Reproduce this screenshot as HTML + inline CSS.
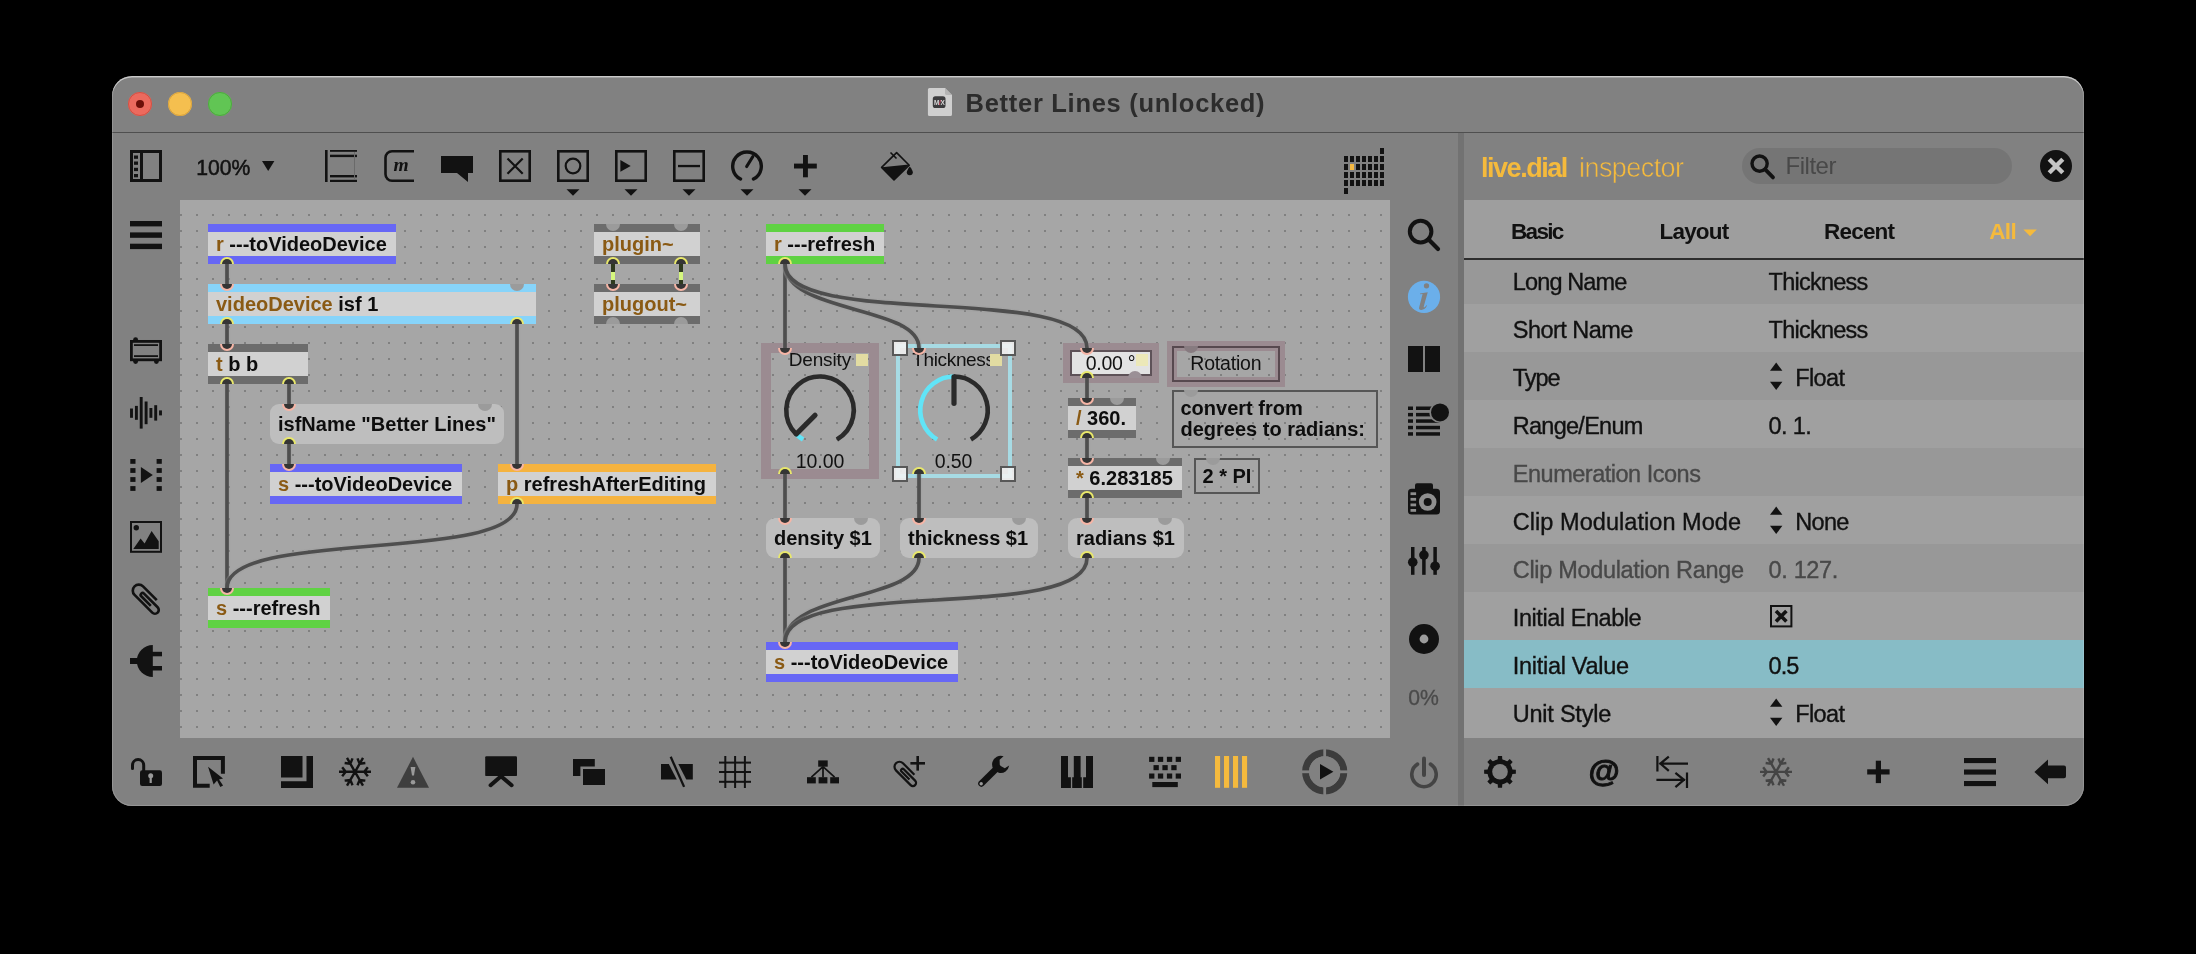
<!DOCTYPE html>
<html><head><meta charset="utf-8"><title>Better Lines (unlocked)</title>
<style>
html,body{margin:0;padding:0;background:#000;}
body{width:2196px;height:954px;overflow:hidden;position:relative;font-family:"Liberation Sans",sans-serif;}
#win{position:absolute;left:112px;top:76px;width:1972px;height:730px;border-radius:20px;overflow:hidden;background:#818181;}
#in{position:absolute;left:-112px;top:-76px;width:2196px;height:954px;will-change:transform;}
svg{position:absolute;left:0;top:0;}
svg text{font-family:"Liberation Sans",sans-serif;}
#edge{position:absolute;left:0;top:0;right:0;bottom:0;border-radius:20px;box-shadow:inset 0 1.5px 0.5px rgba(255,255,255,.5),inset 0 0 0 1px rgba(255,255,255,.16);pointer-events:none;}
.t{position:absolute;white-space:nowrap;line-height:1;}
</style></head><body>
<div id="win"><div id="in">
<svg width="2196" height="954" viewBox="0 0 2196 954">
<rect x="112" y="76" width="1972" height="730" fill="#818181"/>
<rect x="112" y="132" width="1972" height="1" fill="#4f4f4f"/>
<circle cx="140" cy="104" r="12" fill="#ec6a5e"/><circle cx="140" cy="104" r="11.5" fill="none" stroke="#d05044" stroke-width="1"/>
<circle cx="140" cy="104" r="4" fill="#6e0f09"/>
<circle cx="180" cy="104" r="12" fill="#f5bf4f"/><circle cx="180" cy="104" r="11.5" fill="none" stroke="#d9a23c" stroke-width="1"/>
<circle cx="220" cy="104" r="12" fill="#61c554"/><circle cx="220" cy="104" r="11.5" fill="none" stroke="#4ea73f" stroke-width="1"/>
<rect x="180" y="200" width="1210" height="538" fill="#a6a6a6"/>
<defs><pattern id="dots" x="180" y="214" width="16" height="16" patternUnits="userSpaceOnUse"><rect width="2" height="2" fill="#808080"/></pattern><clipPath id="cv"><rect x="180" y="200" width="1210" height="538"/></clipPath></defs>
<rect x="180" y="200" width="1210" height="538" fill="url(#dots)"/>
<rect x="1458" y="133" width="6" height="673" fill="#727272"/>
<g clip-path="url(#cv)">
<rect x="208" y="224" width="188" height="40" fill="#6767f5"/>
<rect x="208" y="232" width="188" height="24" fill="#d1d1d1"/>
<text x="216" y="251" font-size="20" font-weight="bold" fill="#0d0d0d" text-anchor="start"><tspan fill="#8a5a14">r</tspan> ---toVideoDevice</text>
<path d="M220 264A7 7 0 0 1 234 264Z" fill="#e9e86b"/>
<path d="M222 264A5 5 0 0 1 232 264Z" fill="#353535"/>
<rect x="208" y="284" width="328" height="40" fill="#87d4fa"/>
<rect x="208" y="292" width="328" height="24" fill="#d1d1d1"/>
<text x="216" y="311" font-size="20" font-weight="bold" fill="#0d0d0d" text-anchor="start"><tspan fill="#8a5a14">videoDevice</tspan> isf 1</text>
<path d="M220 284A7 7 0 0 0 234 284Z" fill="#f6b5a6"/>
<path d="M222 284A5 5 0 0 0 232 284Z" fill="#353535"/>
<path d="M510 284A7 7 0 0 0 524 284Z" fill="#9b9b9b"/>
<path d="M220 324A7 7 0 0 1 234 324Z" fill="#e9e86b"/>
<path d="M222 324A5 5 0 0 1 232 324Z" fill="#353535"/>
<path d="M510 324A7 7 0 0 1 524 324Z" fill="#e9e86b"/>
<path d="M512 324A5 5 0 0 1 522 324Z" fill="#353535"/>
<rect x="208" y="344" width="100" height="40" fill="#6c6c6c"/>
<rect x="208" y="352" width="100" height="24" fill="#d1d1d1"/>
<text x="216" y="371" font-size="20" font-weight="bold" fill="#0d0d0d" text-anchor="start"><tspan fill="#8a5a14">t</tspan> b b</text>
<path d="M220 344A7 7 0 0 0 234 344Z" fill="#f6b5a6"/>
<path d="M222 344A5 5 0 0 0 232 344Z" fill="#353535"/>
<path d="M220 384A7 7 0 0 1 234 384Z" fill="#e9e86b"/>
<path d="M222 384A5 5 0 0 1 232 384Z" fill="#353535"/>
<path d="M282 384A7 7 0 0 1 296 384Z" fill="#e9e86b"/>
<path d="M284 384A5 5 0 0 1 294 384Z" fill="#353535"/>
<rect x="270" y="404" width="234" height="40" rx="9" fill="#bebebe"/>
<text x="278" y="431" font-size="20" font-weight="bold" fill="#0d0d0d" text-anchor="start">isfName "Better Lines"</text>
<path d="M282 404A7 7 0 0 0 296 404Z" fill="#f6b5a6"/>
<path d="M284 404A5 5 0 0 0 294 404Z" fill="#353535"/>
<path d="M478 404A7 7 0 0 0 492 404Z" fill="#9b9b9b"/>
<path d="M282 444A7 7 0 0 1 296 444Z" fill="#e9e86b"/>
<path d="M284 444A5 5 0 0 1 294 444Z" fill="#353535"/>
<rect x="270" y="464" width="192" height="40" fill="#6767f5"/>
<rect x="270" y="472" width="192" height="24" fill="#d1d1d1"/>
<text x="278" y="491" font-size="20" font-weight="bold" fill="#0d0d0d" text-anchor="start"><tspan fill="#8a5a14">s</tspan> ---toVideoDevice</text>
<path d="M282 464A7 7 0 0 0 296 464Z" fill="#f6b5a6"/>
<path d="M284 464A5 5 0 0 0 294 464Z" fill="#353535"/>
<rect x="498" y="464" width="218" height="40" fill="#f5b33f"/>
<rect x="498" y="472" width="218" height="24" fill="#d1d1d1"/>
<text x="506" y="491" font-size="20" font-weight="bold" fill="#0d0d0d" text-anchor="start"><tspan fill="#8a5a14">p</tspan> refreshAfterEditing</text>
<path d="M510 464A7 7 0 0 0 524 464Z" fill="#f6b5a6"/>
<path d="M512 464A5 5 0 0 0 522 464Z" fill="#353535"/>
<path d="M510 504A7 7 0 0 1 524 504Z" fill="#e9e86b"/>
<path d="M512 504A5 5 0 0 1 522 504Z" fill="#353535"/>
<rect x="208" y="588" width="122" height="40" fill="#5fd243"/>
<rect x="208" y="596" width="122" height="24" fill="#d1d1d1"/>
<text x="216" y="615" font-size="20" font-weight="bold" fill="#0d0d0d" text-anchor="start"><tspan fill="#8a5a14">s</tspan> ---refresh</text>
<path d="M220 588A7 7 0 0 0 234 588Z" fill="#f6b5a6"/>
<path d="M222 588A5 5 0 0 0 232 588Z" fill="#353535"/>
<rect x="594" y="224" width="106" height="40" fill="#6c6c6c"/>
<rect x="594" y="232" width="106" height="24" fill="#d1d1d1"/>
<text x="602" y="251" font-size="20" font-weight="bold" fill="#0d0d0d" text-anchor="start"><tspan fill="#8a5a14">plugin~</tspan></text>
<path d="M606 224A7 7 0 0 0 620 224Z" fill="#9b9b9b"/>
<path d="M674 224A7 7 0 0 0 688 224Z" fill="#9b9b9b"/>
<path d="M606 264A7 7 0 0 1 620 264Z" fill="#e9e86b"/>
<path d="M608 264A5 5 0 0 1 618 264Z" fill="#353535"/>
<path d="M674 264A7 7 0 0 1 688 264Z" fill="#e9e86b"/>
<path d="M676 264A5 5 0 0 1 686 264Z" fill="#353535"/>
<rect x="594" y="284" width="106" height="40" fill="#6c6c6c"/>
<rect x="594" y="292" width="106" height="24" fill="#d1d1d1"/>
<text x="602" y="311" font-size="20" font-weight="bold" fill="#0d0d0d" text-anchor="start"><tspan fill="#8a5a14">plugout~</tspan></text>
<path d="M606 284A7 7 0 0 0 620 284Z" fill="#f6b5a6"/>
<path d="M608 284A5 5 0 0 0 618 284Z" fill="#353535"/>
<path d="M674 284A7 7 0 0 0 688 284Z" fill="#f6b5a6"/>
<path d="M676 284A5 5 0 0 0 686 284Z" fill="#353535"/>
<path d="M606 324A7 7 0 0 1 620 324Z" fill="#9b9b9b"/>
<path d="M674 324A7 7 0 0 1 688 324Z" fill="#9b9b9b"/>
<rect x="766" y="224" width="118" height="40" fill="#5fd243"/>
<rect x="766" y="232" width="118" height="24" fill="#d1d1d1"/>
<text x="774" y="251" font-size="20" font-weight="bold" fill="#0d0d0d" text-anchor="start"><tspan fill="#8a5a14">r</tspan> ---refresh</text>
<path d="M778 264A7 7 0 0 1 792 264Z" fill="#e9e86b"/>
<path d="M780 264A5 5 0 0 1 790 264Z" fill="#353535"/>
<rect x="1068" y="398" width="68" height="40" fill="#6c6c6c"/>
<rect x="1068" y="406" width="68" height="24" fill="#d1d1d1"/>
<text x="1076" y="425" font-size="20" font-weight="bold" fill="#0d0d0d" text-anchor="start"><tspan fill="#8a5a14">/</tspan> 360.</text>
<path d="M1080 398A7 7 0 0 0 1094 398Z" fill="#f6b5a6"/>
<path d="M1082 398A5 5 0 0 0 1092 398Z" fill="#353535"/>
<path d="M1110 398A7 7 0 0 0 1124 398Z" fill="#9b9b9b"/>
<path d="M1080 438A7 7 0 0 1 1094 438Z" fill="#e9e86b"/>
<path d="M1082 438A5 5 0 0 1 1092 438Z" fill="#353535"/>
<rect x="1068" y="458" width="114" height="40" fill="#6c6c6c"/>
<rect x="1068" y="466" width="114" height="24" fill="#d1d1d1"/>
<text x="1076" y="485" font-size="20" font-weight="bold" fill="#0d0d0d" text-anchor="start"><tspan fill="#8a5a14">*</tspan> 6.283185</text>
<path d="M1080 458A7 7 0 0 0 1094 458Z" fill="#f6b5a6"/>
<path d="M1082 458A5 5 0 0 0 1092 458Z" fill="#353535"/>
<path d="M1156 458A7 7 0 0 0 1170 458Z" fill="#9b9b9b"/>
<path d="M1080 498A7 7 0 0 1 1094 498Z" fill="#e9e86b"/>
<path d="M1082 498A5 5 0 0 1 1092 498Z" fill="#353535"/>
<rect x="766" y="518" width="114" height="40" rx="9" fill="#bebebe"/>
<text x="774" y="545" font-size="20" font-weight="bold" fill="#0d0d0d" text-anchor="start">density $1</text>
<path d="M778 518A7 7 0 0 0 792 518Z" fill="#f6b5a6"/>
<path d="M780 518A5 5 0 0 0 790 518Z" fill="#353535"/>
<path d="M854 518A7 7 0 0 0 868 518Z" fill="#9b9b9b"/>
<path d="M778 558A7 7 0 0 1 792 558Z" fill="#e9e86b"/>
<path d="M780 558A5 5 0 0 1 790 558Z" fill="#353535"/>
<rect x="900" y="518" width="138" height="40" rx="9" fill="#bebebe"/>
<text x="908" y="545" font-size="20" font-weight="bold" fill="#0d0d0d" text-anchor="start">thickness $1</text>
<path d="M912 518A7 7 0 0 0 926 518Z" fill="#f6b5a6"/>
<path d="M914 518A5 5 0 0 0 924 518Z" fill="#353535"/>
<path d="M1012 518A7 7 0 0 0 1026 518Z" fill="#9b9b9b"/>
<path d="M912 558A7 7 0 0 1 926 558Z" fill="#e9e86b"/>
<path d="M914 558A5 5 0 0 1 924 558Z" fill="#353535"/>
<rect x="1068" y="518" width="116" height="40" rx="9" fill="#bebebe"/>
<text x="1076" y="545" font-size="20" font-weight="bold" fill="#0d0d0d" text-anchor="start">radians $1</text>
<path d="M1080 518A7 7 0 0 0 1094 518Z" fill="#f6b5a6"/>
<path d="M1082 518A5 5 0 0 0 1092 518Z" fill="#353535"/>
<path d="M1158 518A7 7 0 0 0 1172 518Z" fill="#9b9b9b"/>
<path d="M1080 558A7 7 0 0 1 1094 558Z" fill="#e9e86b"/>
<path d="M1082 558A5 5 0 0 1 1092 558Z" fill="#353535"/>
<rect x="766" y="642" width="192" height="40" fill="#6767f5"/>
<rect x="766" y="650" width="192" height="24" fill="#d1d1d1"/>
<text x="774" y="669" font-size="20" font-weight="bold" fill="#0d0d0d" text-anchor="start"><tspan fill="#8a5a14">s</tspan> ---toVideoDevice</text>
<path d="M778 642A7 7 0 0 0 792 642Z" fill="#f6b5a6"/>
<path d="M780 642A5 5 0 0 0 790 642Z" fill="#353535"/>
<rect x="766" y="348" width="108" height="126" fill="none" stroke="#9b8b91" stroke-width="10"/>
<text x="788.7" y="365.6" font-size="19" font-weight="normal" fill="#111" text-anchor="start" letter-spacing="-0.146">Density</text>
<text x="795.7" y="468" font-size="19.5" font-weight="normal" fill="#111" text-anchor="start" letter-spacing="-0.038">10.00</text>
<rect x="856" y="354" width="12" height="12" fill="#e2dca2"/>
<path d="M803.12 439.53A33.75 33.75 0 0 1 796.14 434.16" fill="none" stroke="#62e4f7" stroke-width="4.6"/>
<path d="M796.14 434.16A33.75 33.75 0 1 1 836.88 439.53" fill="none" stroke="#2a2a2a" stroke-width="4.6"/>
<path d="M815.05 415.25L796.31 433.99" stroke="#2a2a2a" stroke-width="5.2" stroke-linecap="round"/>
<path d="M778 348A7 7 0 0 0 792 348Z" fill="#f6b5a6"/>
<path d="M780 348A5 5 0 0 0 790 348Z" fill="#353535"/>
<path d="M778 474A7 7 0 0 1 792 474Z" fill="#e9e86b"/>
<path d="M780 474A5 5 0 0 1 790 474Z" fill="#353535"/>
<text x="912.2" y="365.6" font-size="19" font-weight="normal" fill="#111" text-anchor="start" letter-spacing="-0.338">Thickness</text>
<text x="934.7" y="468" font-size="19.5" font-weight="normal" fill="#111" text-anchor="start" letter-spacing="-0.133">0.50</text>
<rect x="990" y="354" width="12" height="12" fill="#e2dca2"/>
<path d="M937.12 439.53A33.75 33.75 0 0 1 954.00 376.55" fill="none" stroke="#62e4f7" stroke-width="4.6"/>
<path d="M954.00 376.55A33.75 33.75 0 0 1 970.88 439.53" fill="none" stroke="#2a2a2a" stroke-width="4.6"/>
<path d="M954.00 403.30L954.00 376.80" stroke="#2a2a2a" stroke-width="5.2" stroke-linecap="round"/>
<path d="M912 348A7 7 0 0 0 926 348Z" fill="#f6b5a6"/>
<path d="M914 348A5 5 0 0 0 924 348Z" fill="#353535"/>
<path d="M912 474A7 7 0 0 1 926 474Z" fill="#e9e86b"/>
<path d="M914 474A5 5 0 0 1 924 474Z" fill="#353535"/>
<rect x="898" y="346" width="112" height="130" fill="none" stroke="#a7dbe4" stroke-width="4"/>
<rect x="893" y="341" width="14" height="14" fill="#f2f2f2" fill-opacity=".9" stroke="#585858" stroke-width="2"/>
<rect x="1001" y="341" width="14" height="14" fill="#f2f2f2" fill-opacity=".9" stroke="#585858" stroke-width="2"/>
<rect x="893" y="467" width="14" height="14" fill="#f2f2f2" fill-opacity=".9" stroke="#585858" stroke-width="2"/>
<rect x="1001" y="467" width="14" height="14" fill="#f2f2f2" fill-opacity=".9" stroke="#585858" stroke-width="2"/>
<rect x="1068" y="348" width="86" height="30" fill="none" stroke="#9b8b91" stroke-width="10"/>
<rect x="1070" y="350" width="82" height="26" fill="#5e5258"/>
<rect x="1072" y="352" width="78" height="22" fill="#e3e3e3"/>
<text x="1085.7" y="369.5" font-size="19.5" font-weight="normal" fill="#111" text-anchor="start" letter-spacing="-0.265">0.00 °</text>
<rect x="1136" y="354" width="12" height="12" fill="#ece8b8"/>
<path d="M1080 348A7 7 0 0 0 1094 348Z" fill="#f6b5a6"/>
<path d="M1082 348A5 5 0 0 0 1092 348Z" fill="#353535"/>
<path d="M1080 378A7 7 0 0 1 1094 378Z" fill="#e9e86b"/>
<path d="M1082 378A5 5 0 0 1 1092 378Z" fill="#353535"/>
<path d="M1128 378A7 7 0 0 1 1142 378Z" fill="#9b9096"/>
<rect x="1172" y="346" width="108" height="36" fill="none" stroke="#9b8b91" stroke-width="10"/>
<rect x="1173" y="347" width="106" height="34" fill="none" stroke="#57494f" stroke-width="2"/>
<text x="1190.3" y="369.5" font-size="19.5" font-weight="normal" fill="#111" text-anchor="start" letter-spacing="-0.204">Rotation</text>
<path d="M1184 346A7 7 0 0 0 1198 346Z" fill="#877b80"/>
<rect x="1173" y="391" width="204" height="56" fill="none" stroke="#565656" stroke-width="2"/>
<text x="1180.5" y="414.5" font-size="20" font-weight="bold" fill="#0d0d0d" text-anchor="start">convert from</text>
<text x="1180.5" y="436.4" font-size="20" font-weight="bold" fill="#0d0d0d" text-anchor="start">degrees to radians:</text>
<path d="M1184 390A7 7 0 0 0 1198 390Z" fill="#9b9b9b"/>
<rect x="1195" y="459" width="64" height="34" fill="none" stroke="#565656" stroke-width="2"/>
<text x="1202.5" y="482.5" font-size="20" font-weight="bold" fill="#0d0d0d" text-anchor="start">2 * PI</text>
<path d="M1206 458A7 7 0 0 0 1220 458Z" fill="#9b9b9b"/>
<path d="M227 264L227 284" fill="none" stroke="#9c9c9c" stroke-opacity=".3" stroke-width="6.4"/>
<path d="M227 264L227 284" fill="none" stroke="#4e4e4e" stroke-width="3.7"/>
<path d="M227 324L227 344" fill="none" stroke="#9c9c9c" stroke-opacity=".3" stroke-width="6.4"/>
<path d="M227 324L227 344" fill="none" stroke="#4e4e4e" stroke-width="3.7"/>
<path d="M289 384L289 404" fill="none" stroke="#9c9c9c" stroke-opacity=".3" stroke-width="6.4"/>
<path d="M289 384L289 404" fill="none" stroke="#4e4e4e" stroke-width="3.7"/>
<path d="M289 444L289 464" fill="none" stroke="#9c9c9c" stroke-opacity=".3" stroke-width="6.4"/>
<path d="M289 444L289 464" fill="none" stroke="#4e4e4e" stroke-width="3.7"/>
<path d="M517 324L517 464" fill="none" stroke="#9c9c9c" stroke-opacity=".3" stroke-width="6.4"/>
<path d="M517 324L517 464" fill="none" stroke="#4e4e4e" stroke-width="3.7"/>
<path d="M227 384L227 588" fill="none" stroke="#9c9c9c" stroke-opacity=".3" stroke-width="6.4"/>
<path d="M227 384L227 588" fill="none" stroke="#4e4e4e" stroke-width="3.7"/>
<path d="M517 504C517 564 227 528 227 588" fill="none" stroke="#9c9c9c" stroke-opacity=".3" stroke-width="6.4"/>
<path d="M517 504C517 564 227 528 227 588" fill="none" stroke="#4e4e4e" stroke-width="3.7"/>
<path d="M785 264L785 348" fill="none" stroke="#9c9c9c" stroke-opacity=".3" stroke-width="6.4"/>
<path d="M785 264L785 348" fill="none" stroke="#4e4e4e" stroke-width="3.7"/>
<path d="M785 264C785 314 919 305 919 348" fill="none" stroke="#9c9c9c" stroke-opacity=".3" stroke-width="6.4"/>
<path d="M785 264C785 314 919 305 919 348" fill="none" stroke="#4e4e4e" stroke-width="3.7"/>
<path d="M785 264C785 330 1087 282 1087 348" fill="none" stroke="#9c9c9c" stroke-opacity=".3" stroke-width="6.4"/>
<path d="M785 264C785 330 1087 282 1087 348" fill="none" stroke="#4e4e4e" stroke-width="3.7"/>
<path d="M1087 378L1087 398" fill="none" stroke="#9c9c9c" stroke-opacity=".3" stroke-width="6.4"/>
<path d="M1087 378L1087 398" fill="none" stroke="#4e4e4e" stroke-width="3.7"/>
<path d="M1087 438L1087 458" fill="none" stroke="#9c9c9c" stroke-opacity=".3" stroke-width="6.4"/>
<path d="M1087 438L1087 458" fill="none" stroke="#4e4e4e" stroke-width="3.7"/>
<path d="M1087 498L1087 518" fill="none" stroke="#9c9c9c" stroke-opacity=".3" stroke-width="6.4"/>
<path d="M1087 498L1087 518" fill="none" stroke="#4e4e4e" stroke-width="3.7"/>
<path d="M785 474L785 518" fill="none" stroke="#9c9c9c" stroke-opacity=".3" stroke-width="6.4"/>
<path d="M785 474L785 518" fill="none" stroke="#4e4e4e" stroke-width="3.7"/>
<path d="M919 474L919 518" fill="none" stroke="#9c9c9c" stroke-opacity=".3" stroke-width="6.4"/>
<path d="M919 474L919 518" fill="none" stroke="#4e4e4e" stroke-width="3.7"/>
<path d="M785 558L785 642" fill="none" stroke="#9c9c9c" stroke-opacity=".3" stroke-width="6.4"/>
<path d="M785 558L785 642" fill="none" stroke="#4e4e4e" stroke-width="3.7"/>
<path d="M919 558C919 601 785 592 785 642" fill="none" stroke="#9c9c9c" stroke-opacity=".3" stroke-width="6.4"/>
<path d="M919 558C919 601 785 592 785 642" fill="none" stroke="#4e4e4e" stroke-width="3.7"/>
<path d="M1087 558C1087 624 785 576 785 642" fill="none" stroke="#9c9c9c" stroke-opacity=".3" stroke-width="6.4"/>
<path d="M1087 558C1087 624 785 576 785 642" fill="none" stroke="#4e4e4e" stroke-width="3.7"/>
<rect x="611" y="264" width="4" height="20" fill="#2f3a1e"/>
<rect x="611" y="272" width="4" height="8" fill="#d6f77e"/>
<rect x="679" y="264" width="4" height="20" fill="#2f3a1e"/>
<rect x="679" y="272" width="4" height="8" fill="#d6f77e"/>
</g>
<rect x="131.5" y="151.5" width="29" height="29" fill="none" stroke="#121212" stroke-width="3"/>
<rect x="140" y="151" width="3" height="30" fill="#121212"/>
<rect x="134" y="155.5" width="4" height="3.3" fill="#121212"/>
<rect x="134" y="161.5" width="4" height="3.3" fill="#121212"/>
<rect x="134" y="167.8" width="4" height="3.3" fill="#121212"/>
<rect x="134" y="174" width="4" height="3.3" fill="#121212"/>
<text x="196.2" y="174.8" font-size="21.2" font-weight="normal" fill="#121212" text-anchor="start" stroke="#121212" stroke-width=".5">100%</text>
<path d="M262 161h12.4l-6.2 10z" fill="#121212"/>
<rect x="325" y="150" width="2.6" height="32" fill="#121212"/>
<rect x="330" y="150" width="27" height="1.8" fill="#121212"/><rect x="330" y="154.7" width="27" height="2.4" fill="#121212"/>
<rect x="330" y="175" width="27" height="2.4" fill="#121212"/><rect x="330" y="179.8" width="27" height="2.2" fill="#121212"/>
<rect x="354" y="152" width="1" height="27" fill="#6a6a6a"/>
<path d="M414 151.2h-22a6.5 6.5 0 0 0 -6.5 6.5v16.6a6.5 6.5 0 0 0 6.5 6.5h22" fill="none" stroke="#121212" stroke-width="2.6"/>
<text x="401" y="171" font-family="Liberation Serif" font-style="italic" font-weight="bold" font-size="19.5" text-anchor="middle" fill="#121212" style="font-family:'Liberation Serif',serif">m</text>
<path d="M441 156h32v17h-5v9l-11-9h-16z" fill="#121212"/>
<rect x="500.3" y="151.3" width="29.4" height="29.4" fill="none" stroke="#121212" stroke-width="2.6"/>
<path d="M507.5 158.5l15.2 15.2M522.7 158.5l-15.2 15.2" stroke="#121212" stroke-width="2.2"/>
<rect x="558.3" y="151.3" width="29.4" height="29.4" fill="none" stroke="#121212" stroke-width="2.6"/>
<circle cx="573" cy="166" r="7.3" fill="none" stroke="#121212" stroke-width="2.2"/>
<path d="M566.5 189.2h13l-6.5 6.5z" fill="#121212"/>
<rect x="616.3" y="151.3" width="29.4" height="29.4" fill="none" stroke="#121212" stroke-width="2.6"/>
<path d="M620.4 160v11.8l10.3 -5.9z" fill="#121212"/>
<path d="M624.5 189.2h13l-6.5 6.5z" fill="#121212"/>
<rect x="674.3" y="151.3" width="29.4" height="29.4" fill="none" stroke="#121212" stroke-width="2.6"/>
<rect x="678" y="164.9" width="22" height="2.3" fill="#121212"/>
<path d="M682.5 189.2h13l-6.5 6.5z" fill="#121212"/>
<path d="M740.51 179.04A14.3 14.3 0 1 1 753.49 179.04" fill="none" stroke="#121212" stroke-width="3.4" stroke-linecap="round"/>
<path d="M746.6 166.6L752.8 156.6" stroke="#121212" stroke-width="3" stroke-linecap="round"/>
<path d="M740.5 189.2h13l-6.5 6.5z" fill="#121212"/>
<rect x="794" y="163.6" width="22.8" height="4.9" fill="#121212"/><rect x="803" y="155" width="4.9" height="22.3" fill="#121212"/>
<path d="M798.5 189.2h13l-6.5 6.5z" fill="#121212"/>
<path d="M896.6 152.6L909.2 165.2L894 180L881.6 167.4Z" fill="none" stroke="#121212" stroke-width="1.6" stroke-linejoin="round"/>
<path d="M881.8 167.3L909 164.6L894 180Z" fill="#121212"/>
<path d="M890.5 152.5L896.5 158.5" stroke="#121212" stroke-width="1.6"/>
<path d="M909.8 166.5c2 2.8 3 4.3 3 5.8a3 3 0 0 1 -6 0c0 -1.5 1 -3 3 -5.8z" fill="#121212"/>
<rect x="1344" y="156" width="4" height="6" fill="#121212"/>
<rect x="1344" y="164" width="4" height="6" fill="#121212"/>
<rect x="1344" y="172" width="4" height="6" fill="#121212"/>
<rect x="1344" y="180" width="4" height="6" fill="#121212"/>
<rect x="1350" y="156" width="4" height="6" fill="#121212"/>
<rect x="1350" y="164" width="4" height="6" fill="#f5b942"/>
<rect x="1350" y="172" width="4" height="6" fill="#121212"/>
<rect x="1350" y="180" width="4" height="6" fill="#121212"/>
<rect x="1356" y="156" width="4" height="6" fill="#121212"/>
<rect x="1356" y="164" width="4" height="6" fill="#121212"/>
<rect x="1356" y="172" width="4" height="6" fill="#121212"/>
<rect x="1356" y="180" width="4" height="6" fill="#121212"/>
<rect x="1362" y="156" width="4" height="6" fill="#121212"/>
<rect x="1362" y="164" width="4" height="6" fill="#121212"/>
<rect x="1362" y="172" width="4" height="6" fill="#121212"/>
<rect x="1362" y="180" width="4" height="6" fill="#121212"/>
<rect x="1368" y="156" width="4" height="6" fill="#121212"/>
<rect x="1368" y="164" width="4" height="6" fill="#121212"/>
<rect x="1368" y="172" width="4" height="6" fill="#121212"/>
<rect x="1368" y="180" width="4" height="6" fill="#121212"/>
<rect x="1374" y="156" width="4" height="6" fill="#121212"/>
<rect x="1374" y="164" width="4" height="6" fill="#121212"/>
<rect x="1374" y="172" width="4" height="6" fill="#121212"/>
<rect x="1374" y="180" width="4" height="6" fill="#121212"/>
<rect x="1380" y="156" width="4" height="6" fill="#121212"/>
<rect x="1380" y="164" width="4" height="6" fill="#121212"/>
<rect x="1380" y="172" width="4" height="6" fill="#121212"/>
<rect x="1380" y="180" width="4" height="6" fill="#121212"/>
<rect x="1380" y="148" width="4" height="6" fill="#121212"/><rect x="1344" y="188" width="4" height="6" fill="#121212"/>
<rect x="130" y="221" width="32" height="5.4" fill="#121212"/>
<rect x="130" y="232.4" width="32" height="5.4" fill="#121212"/>
<rect x="130" y="243.7" width="32" height="5.4" fill="#121212"/>
<rect x="131.4" y="341.4" width="29.2" height="18.4" fill="none" stroke="#121212" stroke-width="2.8"/>
<rect x="134" y="344.2" width="24" height="1.8" fill="#121212"/><rect x="134" y="355.2" width="24" height="1.8" fill="#121212"/>
<circle cx="135.6" cy="339.6" r="2.4" fill="#121212"/><circle cx="135.6" cy="361.6" r="2.4" fill="#121212"/><circle cx="156.4" cy="361.6" r="2.4" fill="#121212"/>
<rect x="130.05" y="408.5" width="2.9" height="9.3" fill="#121212"/>
<rect x="134.95000000000002" y="405.9" width="2.9" height="13.9" fill="#121212"/>
<rect x="139.75" y="397" width="2.9" height="31.6" fill="#121212"/>
<rect x="144.65" y="401.5" width="2.9" height="22.7" fill="#121212"/>
<rect x="149.45000000000002" y="408" width="2.9" height="9.8" fill="#121212"/>
<rect x="154.25" y="405.2" width="2.9" height="15.4" fill="#121212"/>
<rect x="159.05" y="410.4" width="2.9" height="5.0" fill="#121212"/>
<rect x="130.3" y="459.0" width="5.2" height="4.8" fill="#121212"/><rect x="156.6" y="459.0" width="5.2" height="4.8" fill="#121212"/>
<rect x="130.3" y="468.1" width="5.2" height="4.8" fill="#121212"/><rect x="156.6" y="468.1" width="5.2" height="4.8" fill="#121212"/>
<rect x="130.3" y="477.1" width="5.2" height="4.8" fill="#121212"/><rect x="156.6" y="477.1" width="5.2" height="4.8" fill="#121212"/>
<rect x="130.3" y="486.1" width="5.2" height="4.8" fill="#121212"/><rect x="156.6" y="486.1" width="5.2" height="4.8" fill="#121212"/>
<path d="M140.9 466.9v16.2l11.9 -8.1z" fill="#121212"/>
<rect x="131" y="522" width="30" height="29.8" fill="none" stroke="#121212" stroke-width="2"/>
<circle cx="136.3" cy="527.8" r="2.7" fill="#121212"/>
<path d="M133.3 549L140.6 538.4L144.6 543.5L151.6 531L158.7 541.3V549Z" fill="#121212"/>
<path transform="translate(129.37 589.7) scale(1.0) rotate(45)" d="M26.75 -12L7.33 -12A6 6 0 0 0 7.33 0L32.4 0A3.785 3.785 0 0 0 32.4 -7.57L13.1 -7.57A1.91 1.91 0 0 0 13.1 -3.75L26.6 -3.75" fill="none" stroke="#121212" stroke-width="2.65"/>
<path d="M152.8 645A16 16 0 0 0 152.8 677Z" fill="#121212"/>
<rect x="130" y="658" width="10" height="6" fill="#121212"/>
<rect x="152" y="651.8" width="10" height="4.5" fill="#121212"/><rect x="152" y="666" width="10" height="4.5" fill="#121212"/>
<circle cx="1420.6" cy="231.6" r="10.8" fill="none" stroke="#121212" stroke-width="4"/>
<path d="M1428.6 239.6L1438 249" stroke="#121212" stroke-width="4.2" stroke-linecap="round"/>
<circle cx="1424" cy="296.9" r="16.1" fill="#6bafea"/>
<circle cx="1426.5" cy="285.8" r="2.65" fill="#818181"/>
<path d="M1420.02 293.54L1427.74 292.23L1423.73 306.42Q1423.54 307.77 1424.6 307.29Q1425.57 306.8 1426.44 305.26L1427.01 305.6Q1425.08 309.94 1421.23 309.94Q1418.57 309.94 1419.2 307.29L1422.58 294.02L1420.02 294.16Z" fill="#818181"/>
<rect x="1408" y="346" width="15" height="26" fill="#121212"/><rect x="1425" y="346" width="15" height="26" fill="#121212"/>
<rect x="1408" y="406.5" width="5" height="3.5" fill="#121212"/><rect x="1416" y="406.5" width="24" height="3.5" fill="#121212"/>
<rect x="1408" y="412.9" width="5" height="3.5" fill="#121212"/><rect x="1416" y="412.9" width="24" height="3.5" fill="#121212"/>
<rect x="1408" y="419.3" width="5" height="3.5" fill="#121212"/><rect x="1416" y="419.3" width="24" height="3.5" fill="#121212"/>
<rect x="1408" y="425.8" width="5" height="3.5" fill="#121212"/><rect x="1416" y="425.8" width="24" height="3.5" fill="#121212"/>
<rect x="1408" y="432.2" width="5" height="3.5" fill="#121212"/><rect x="1416" y="432.2" width="24" height="3.5" fill="#121212"/>
<circle cx="1440" cy="412.4" r="10.6" fill="#818181"/><circle cx="1440" cy="412.4" r="9" fill="#121212"/>
<rect x="1415" y="483.2" width="18" height="9" rx="2" fill="#121212"/><rect x="1408" y="488.8" width="32" height="25.8" rx="3.5" fill="#121212"/>
<circle cx="1427.7" cy="502" r="8.8" fill="#8e8e8e"/><circle cx="1427.7" cy="502" r="4" fill="#121212"/>
<rect x="1410.5" y="492.3" width="5.6" height="2.8" fill="#8e8e8e"/>
<rect x="1410.5" y="497.9" width="5.6" height="2.8" fill="#8e8e8e"/>
<rect x="1410.5" y="503.5" width="5.6" height="2.8" fill="#8e8e8e"/>
<rect x="1410.5" y="509" width="5.6" height="2.8" fill="#8e8e8e"/>
<rect x="1411.0" y="547" width="3.5" height="27.8" fill="#121212"/><circle cx="1412.75" cy="562.2" r="4.8" fill="#121212"/>
<rect x="1422.15" y="547" width="3.5" height="27.8" fill="#121212"/><circle cx="1423.9" cy="555.1" r="4.8" fill="#121212"/>
<rect x="1433.35" y="547" width="3.5" height="27.8" fill="#121212"/><circle cx="1435.1" cy="566.2" r="4.8" fill="#121212"/>
<circle cx="1424" cy="639" r="15" fill="#121212"/><circle cx="1424" cy="639" r="4.4" fill="#9c9c9c"/>
<text x="1423.5" y="704.7" font-size="21.2" font-weight="normal" fill="#4a4a4a" text-anchor="middle" stroke="#4a4a4a" stroke-width=".3">0%</text>
<path d="M1417.53 764.15A12.2 12.2 0 1 0 1430.47 764.15" fill="none" stroke="#444" stroke-width="3.6" stroke-linecap="round"/>
<path d="M1424 758.5V775" stroke="#444" stroke-width="4" stroke-linecap="round"/>
<rect x="140" y="770.2" width="22" height="15.8" rx="2.2" fill="#121212"/>
<path d="M132.5 768.5v-3.3a5.6 5.6 0 0 1 11.2 0v6" fill="none" stroke="#121212" stroke-width="3" stroke-linecap="round"/>
<circle cx="150.7" cy="775.7" r="2.5" fill="#9a9a9a"/><rect x="149.6" y="776" width="2.2" height="7" fill="#9a9a9a"/>
<path d="M209.7 785.8H195V758H222.9V773.75" fill="none" stroke="#121212" stroke-width="4"/>
<path d="M208.06 766.84L213.6 784.4L217.06 780.4L220.3 786.9L223.05 785.5L219 779.5L223.05 778.6Z" fill="#121212"/>
<rect x="281" y="756" width="21.5" height="21.5" fill="#121212"/>
<path d="M306.5 756H313V788H281V781.2H306.5Z" fill="#121212"/>
<path d="M355.00 771.80L371.00 771.80M364.28 771.80L367.83 767.26M364.28 771.80L367.83 776.34M355.00 771.80L363.00 785.66M359.64 779.84L365.34 780.64M359.64 779.84L357.48 785.18M355.00 771.80L347.00 785.66M350.36 779.84L352.52 785.18M350.36 779.84L344.66 780.64M355.00 771.80L339.00 771.80M345.72 771.80L342.17 776.34M345.72 771.80L342.17 767.26M355.00 771.80L347.00 757.94M350.36 763.76L344.66 762.96M350.36 763.76L352.52 758.42M355.00 771.80L363.00 757.94M359.64 763.76L357.48 758.42M359.64 763.76L365.34 762.96" fill="none" stroke="#121212" stroke-width="2.4"/>
<path d="M413 756.8L429 787.8H397Z" fill="#3e3e3e"/>
<path d="M410.6 767h4.8l-1.4 8.6h-2z" fill="#9a9a9a"/><circle cx="413" cy="782.2" r="2.3" fill="#9a9a9a"/>
<rect x="485.2" y="756.3" width="31.8" height="19.8" rx="1.2" fill="#121212"/>
<path d="M490.6 785.2L501 776.2L511.6 785.2" fill="none" stroke="#121212" stroke-width="4" stroke-linecap="round" stroke-linejoin="round"/>
<path d="M573 759h21.8v7.4H580.4V776H573Z" fill="#121212"/><rect x="583" y="769" width="22" height="16" fill="#121212"/>
<path d="M661 764h7.8l8 15.6H661Z" fill="#121212"/><path d="M678.3 764h14.5v15.6h-6.5Z" fill="#121212"/>
<path d="M670.7 756.8L684.1 786.9" stroke="#121212" stroke-width="2.3"/>
<rect x="724.3" y="756" width="2" height="32" fill="#121212"/>
<rect x="734.1" y="756" width="2" height="32" fill="#121212"/>
<rect x="743.9" y="756" width="2" height="32" fill="#121212"/>
<rect x="719" y="761.6" width="32" height="2" fill="#121212"/>
<rect x="719" y="771" width="32" height="2" fill="#121212"/>
<rect x="719" y="780.8" width="32" height="2" fill="#121212"/>
<rect x="818.2" y="760.4" width="9.5" height="6.3" fill="#121212"/>
<rect x="807" y="777.2" width="8.8" height="6.2" fill="#121212"/>
<rect x="818.6" y="777.2" width="8.8" height="6.2" fill="#121212"/>
<rect x="830.2" y="777.2" width="8.8" height="6.2" fill="#121212"/>
<path d="M823 766.7L811.4 777.2M823 766.7V777.2M823 766.7L834.6 777.2" stroke="#121212" stroke-width="1.7"/>
<path transform="translate(891.65 766.07) scale(0.83) rotate(45)" d="M26.75 -12L7.33 -12A6 6 0 0 0 7.33 0L32.4 0A3.785 3.785 0 0 0 32.4 -7.57L13.1 -7.57A1.91 1.91 0 0 0 13.1 -3.75L26.6 -3.75" fill="none" stroke="#121212" stroke-width="2.7"/>
<rect x="910.4" y="762" width="14.6" height="2.6" fill="#121212"/><rect x="916.4" y="756" width="2.6" height="14.6" fill="#121212"/>
<path d="M981.4 783.6L997.6 767.4" stroke="#121212" stroke-width="6.4" stroke-linecap="round"/>
<path d="M1003.6 756.2a8.6 8.6 0 1 0 5.6 9.4l-4.4 2.6l-5 -2.8l-.2 -5.6z" fill="#121212"/>
<circle cx="981.2" cy="783.8" r="1.7" fill="#9a9a9a"/>
<path d="M1061 756h7v21.2h2.9V788H1061Z" fill="#121212"/><path d="M1073.8 756h6.8v21.2h1.2V788h-9.6V777.2h1.6Z" fill="#121212"/><path d="M1086 756h7V788h-9.8V777.2h2.8Z" fill="#121212"/>
<rect x="1149.1" y="756.8" width="5.3" height="5.1" fill="#121212"/>
<rect x="1157.9" y="756.8" width="5.3" height="5.1" fill="#121212"/>
<rect x="1166.9" y="756.8" width="5.3" height="5.1" fill="#121212"/>
<rect x="1175.7" y="756.8" width="5.3" height="5.1" fill="#121212"/>
<rect x="1153.5" y="765.1" width="5.3" height="5.1" fill="#121212"/>
<rect x="1162.4" y="765.1" width="5.3" height="5.1" fill="#121212"/>
<rect x="1171.3" y="765.1" width="5.3" height="5.1" fill="#121212"/>
<rect x="1149.1" y="773.5" width="5.3" height="5.1" fill="#121212"/>
<rect x="1157.9" y="773.5" width="5.3" height="5.1" fill="#121212"/>
<rect x="1166.9" y="773.5" width="5.3" height="5.1" fill="#121212"/>
<rect x="1175.7" y="773.5" width="5.3" height="5.1" fill="#121212"/>
<rect x="1152.3" y="782" width="25.5" height="5.1" fill="#121212"/>
<rect x="1215" y="756" width="5.1" height="31.8" fill="#f5ba3e"/>
<rect x="1224" y="756" width="5.1" height="31.8" fill="#f5ba3e"/>
<rect x="1233" y="756" width="5.1" height="31.8" fill="#f5ba3e"/>
<rect x="1242" y="756" width="5.1" height="31.8" fill="#f5ba3e"/>
<circle cx="1324.7" cy="771.8" r="19.1" fill="none" stroke="#3c3c3c" stroke-width="7"/>
<rect x="1323.3" y="748" width="2.8" height="48" fill="#818181"/><rect x="1301" y="770.4" width="48" height="2.8" fill="#818181"/>
<circle cx="1324.7" cy="771.8" r="15.6" fill="#818181"/>
<path d="M1320 764v15.6l13.4 -7.8z" fill="#121212"/>
<path d="M929.5 88h15.5l7 7v19.4a1.6 1.6 0 0 1 -1.6 1.6h-20.9a1.6 1.6 0 0 1 -1.6 -1.6v-24.8a1.6 1.6 0 0 1 1.6 -1.6z" fill="#cfcfcf"/>
<path d="M945 88l7 7h-5.6a1.4 1.4 0 0 1 -1.4 -1.4z" fill="#b4b4b4"/>
<rect x="932.8" y="96.2" width="12.7" height="11.8" rx="2.6" fill="#3c3c3e"/>
<text x="939.2" y="104.6" font-size="6.4" font-weight="bold" text-anchor="middle" fill="#d8d8d8" letter-spacing="-.4">M<tspan fill="#e0506a">/</tspan>X</text>
<text x="965.6" y="111.5" font-size="25.5" font-weight="bold" fill="#2c2c2c" text-anchor="start" letter-spacing="0.71">Better Lines (unlocked)</text>
<text x="1481.0" y="176.7" font-size="27" font-weight="bold" fill="#f5ba3c" text-anchor="start" letter-spacing="-1.475">live.dial</text>
<text x="1579.0" y="176.7" font-size="27" font-weight="normal" fill="#f5ba3c" text-anchor="start" letter-spacing="-0.562" stroke="#818181" stroke-width=".55">inspector</text>
<rect x="1742" y="148" width="270" height="36" rx="18" fill="#757575"/>
<circle cx="1759.6" cy="163.6" r="7.6" fill="none" stroke="#121212" stroke-width="3.4"/><path d="M1765.4 169.6L1773 177.4" stroke="#121212" stroke-width="3.8" stroke-linecap="round"/>
<text x="1785.5" y="174" font-size="24" font-weight="normal" fill="#484848" text-anchor="start" letter-spacing="-0.475">Filter</text>
<circle cx="2056" cy="166" r="16" fill="#121212"/>
<path d="M2049.2 159.2l13.6 13.6M2062.8 159.2l-13.6 13.6" stroke="#c4c4c4" stroke-width="4.4"/>
<rect x="1464" y="200" width="620" height="58" fill="#9e9e9e"/>
<rect x="1464" y="258" width="620" height="2" fill="#2e2e2e"/>
<text x="1511.0" y="239" font-size="22.5" font-weight="bold" fill="#111" text-anchor="start" letter-spacing="-1.675">Basic</text>
<text x="1659.6" y="239" font-size="22.5" font-weight="bold" fill="#111" text-anchor="start" letter-spacing="-0.83">Layout</text>
<text x="1824.0" y="239" font-size="22.5" font-weight="bold" fill="#111" text-anchor="start" letter-spacing="-0.8">Recent</text>
<text x="1989.3" y="239" font-size="22.5" font-weight="bold" fill="#f5ba3c" text-anchor="start" letter-spacing="-0.675">All</text>
<path d="M2023.4 229.4h13.4l-6.7 6.8z" fill="#f5ba3c"/>
<rect x="1464" y="260" width="620" height="44" fill="#989898"/>
<text x="1512.8" y="289.6" font-size="23.5" font-weight="normal" fill="#111" text-anchor="start" letter-spacing="-0.875" stroke="#111" stroke-width=".35">Long Name</text>
<text x="1768.6" y="289.6" font-size="23.5" font-weight="normal" fill="#111" text-anchor="start" letter-spacing="-0.756" stroke="#111" stroke-width=".35">Thickness</text>
<rect x="1464" y="304" width="620" height="48" fill="#a0a0a0"/>
<text x="1512.8" y="337.6" font-size="23.5" font-weight="normal" fill="#111" text-anchor="start" letter-spacing="-0.542" stroke="#111" stroke-width=".35">Short Name</text>
<text x="1768.6" y="337.6" font-size="23.5" font-weight="normal" fill="#111" text-anchor="start" letter-spacing="-0.756" stroke="#111" stroke-width=".35">Thickness</text>
<rect x="1464" y="352" width="620" height="48" fill="#989898"/>
<text x="1512.8" y="385.6" font-size="23.5" font-weight="normal" fill="#111" text-anchor="start" letter-spacing="-1.033" stroke="#111" stroke-width=".35">Type</text>
<text x="1795.3" y="385.6" font-size="23.5" font-weight="normal" fill="#111" text-anchor="start" letter-spacing="-0.637" stroke="#111" stroke-width=".35">Float</text>
<path d="M1770 370.8h12.4l-6.2 -8.2z" fill="#121212"/><path d="M1770 381.8h12.4l-6.2 8.2z" fill="#121212"/>
<rect x="1464" y="400" width="620" height="48" fill="#a0a0a0"/>
<text x="1512.8" y="433.6" font-size="23.5" font-weight="normal" fill="#111" text-anchor="start" letter-spacing="-0.736" stroke="#111" stroke-width=".35">Range/Enum</text>
<text x="1768.6" y="433.6" font-size="23.5" font-weight="normal" fill="#111" text-anchor="start" letter-spacing="-0.662" stroke="#111" stroke-width=".35">0. 1.</text>
<rect x="1464" y="448" width="620" height="48" fill="#989898"/>
<text x="1512.8" y="481.6" font-size="23.5" font-weight="normal" fill="#484848" text-anchor="start" letter-spacing="-0.487" stroke="#484848" stroke-width=".35">Enumeration Icons</text>
<rect x="1464" y="496" width="620" height="48" fill="#a0a0a0"/>
<text x="1512.8" y="529.6" font-size="23.5" font-weight="normal" fill="#111" text-anchor="start" letter-spacing="0.05" stroke="#111" stroke-width=".35">Clip Modulation Mode</text>
<text x="1795.3" y="529.6" font-size="23.5" font-weight="normal" fill="#111" text-anchor="start" letter-spacing="-0.708" stroke="#111" stroke-width=".35">None</text>
<path d="M1770 514.8h12.4l-6.2 -8.2z" fill="#121212"/><path d="M1770 525.8h12.4l-6.2 8.2z" fill="#121212"/>
<rect x="1464" y="544" width="620" height="48" fill="#989898"/>
<text x="1512.8" y="577.6" font-size="23.5" font-weight="normal" fill="#484848" text-anchor="start" letter-spacing="-0.327" stroke="#484848" stroke-width=".35">Clip Modulation Range</text>
<text x="1768.6" y="577.6" font-size="23.5" font-weight="normal" fill="#484848" text-anchor="start" letter-spacing="-0.362" stroke="#484848" stroke-width=".35">0. 127.</text>
<rect x="1464" y="592" width="620" height="48" fill="#a0a0a0"/>
<text x="1512.8" y="625.6" font-size="23.5" font-weight="normal" fill="#111" text-anchor="start" letter-spacing="-0.44" stroke="#111" stroke-width=".35">Initial Enable</text>
<rect x="1771" y="606" width="20.4" height="20.4" fill="none" stroke="#121212" stroke-width="2"/>
<path d="M1776 611l10.4 10.4M1786.4 611l-10.4 10.4" stroke="#121212" stroke-width="3.6"/>
<rect x="1464" y="640" width="620" height="48" fill="#87bcc6"/>
<text x="1512.8" y="673.6" font-size="23.5" font-weight="normal" fill="#111" text-anchor="start" letter-spacing="-0.296" stroke="#111" stroke-width=".35">Initial Value</text>
<text x="1768.6" y="673.6" font-size="23.5" font-weight="normal" fill="#111" text-anchor="start" letter-spacing="-0.962" stroke="#111" stroke-width=".35">0.5</text>
<rect x="1464" y="688" width="620" height="50" fill="#a0a0a0"/>
<text x="1512.8" y="721.6" font-size="23.5" font-weight="normal" fill="#111" text-anchor="start" letter-spacing="-0.236" stroke="#111" stroke-width=".35">Unit Style</text>
<text x="1795.3" y="721.6" font-size="23.5" font-weight="normal" fill="#111" text-anchor="start" letter-spacing="-0.637" stroke="#111" stroke-width=".35">Float</text>
<path d="M1770 706.8h12.4l-6.2 -8.2z" fill="#121212"/><path d="M1770 717.8h12.4l-6.2 8.2z" fill="#121212"/>
<path d="M1511.98 769.50L1515.86 769.73L1515.86 773.87L1511.98 774.10L1510.10 778.64L1512.68 781.55L1509.75 784.48L1506.84 781.90L1502.30 783.78L1502.07 787.66L1497.93 787.66L1497.70 783.78L1493.16 781.90L1490.25 784.48L1487.32 781.55L1489.90 778.64L1488.02 774.10L1484.14 773.87L1484.14 769.73L1488.02 769.50L1489.90 764.96L1487.32 762.05L1490.25 759.12L1493.16 761.70L1497.70 759.82L1497.93 755.94L1502.07 755.94L1502.30 759.82L1506.84 761.70L1509.75 759.12L1512.68 762.05L1510.10 764.96Z" fill="#121212"/>
<circle cx="1500" cy="771.8" r="12.6" fill="#121212"/><circle cx="1500" cy="771.8" r="7.8" fill="#818181"/>
<text x="1604.2" y="781.6" font-size="32" font-weight="bold" text-anchor="middle" fill="#121212" stroke="#121212" stroke-width="1">@</text>
<path d="M1657.4 756v15.4M1659.4 763.6H1688M1668.8 756.6L1660.4 763.6L1668.8 770.8" fill="none" stroke="#121212" stroke-width="2.2"/>
<path d="M1687 772.6V788M1656.4 779.8H1685M1675.4 772.8L1684 779.8L1675.4 787.2" fill="none" stroke="#121212" stroke-width="2.2"/>
<path d="M1776.00 771.90L1792.00 771.90M1785.28 771.90L1788.83 767.36M1785.28 771.90L1788.83 776.44M1776.00 771.90L1784.00 785.76M1780.64 779.94L1786.34 780.74M1780.64 779.94L1778.48 785.28M1776.00 771.90L1768.00 785.76M1771.36 779.94L1773.52 785.28M1771.36 779.94L1765.66 780.74M1776.00 771.90L1760.00 771.90M1766.72 771.90L1763.17 776.44M1766.72 771.90L1763.17 767.36M1776.00 771.90L1768.00 758.04M1771.36 763.86L1765.66 763.06M1771.36 763.86L1773.52 758.52M1776.00 771.90L1784.00 758.04M1780.64 763.86L1778.48 758.52M1780.64 763.86L1786.34 763.06" fill="none" stroke="#444" stroke-width="2.4"/>
<rect x="1867.2" y="769.3" width="22.4" height="5.2" fill="#121212"/><rect x="1875.8" y="760.7" width="5.2" height="22.4" fill="#121212"/>
<rect x="1964" y="758" width="32" height="5.1" fill="#121212"/>
<rect x="1964" y="769.5" width="32" height="5.1" fill="#121212"/>
<rect x="1964" y="781" width="32" height="5.1" fill="#121212"/>
<path d="M2034.4 771.9L2048 759.4V765.5H2064a2 2 0 0 1 2 2v8.8a2 2 0 0 1 -2 2H2048V784.3Z" fill="#121212"/>
</svg>

</div><div id="edge"></div></div>
</body></html>
